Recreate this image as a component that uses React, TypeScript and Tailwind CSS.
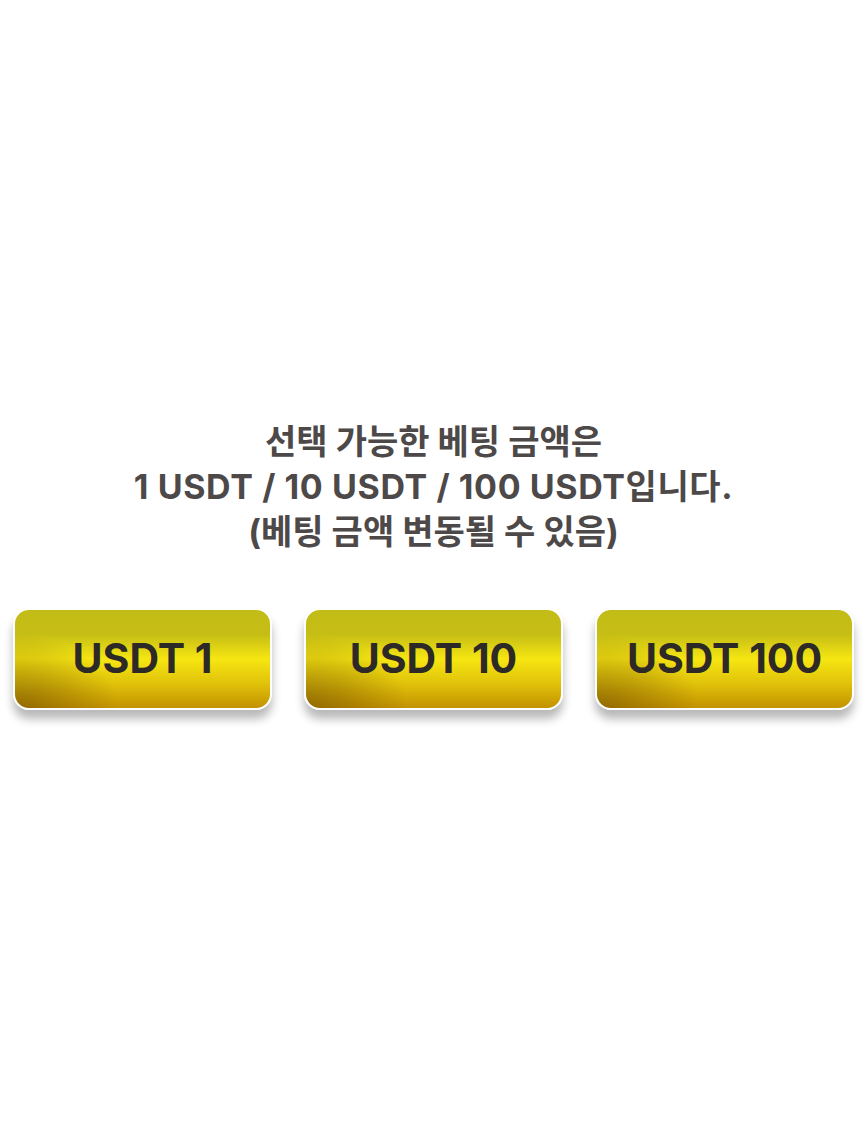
export default function App() {
  const amounts = ["USDT 1", "USDT 10", "USDT 100"];

  return (
    <div
      className="min-h-screen h-[1128px] bg-white flex flex-col justify-center"
      style={{ fontFamily: "Inter, 'Noto Sans CJK KR', sans-serif" }}
    >
      {/* 안내 문구 */}
      <div className="text-center text-[34px] leading-[45px] font-bold text-[#4e4949]">
        <p>선택 가능한 베팅 금액은</p>
        <p className="tracking-[0.6px]">1 USDT / 10 USDT / 100 USDT입니다.</p>
        <p>(베팅 금액 변동될 수 있음)</p>
      </div>

      {/* 금액 버튼 */}
      <div className="mt-[54px] px-[13px] flex gap-[32px]">
        {amounts.map((label) => (
          <button
            key={label}
            className="flex-1 h-[102px] rounded-[16px] border-2 border-white shadow-[0_9px_10px_rgba(0,0,0,0.28)] bg-[radial-gradient(ellipse_40%_75%_at_0%_100%,rgba(105,70,0,0.55),rgba(105,70,0,0)_100%),linear-gradient(to_bottom,#c2bc17_0%,#c6be15_25%,#f6e612_50%,#e0c20a_75%,#c39200_100%)] flex items-center justify-center"
          >
            <span className="text-[41px] font-bold text-[#2d2926]">{label}</span>
          </button>
        ))}
      </div>
    </div>
  );
}
